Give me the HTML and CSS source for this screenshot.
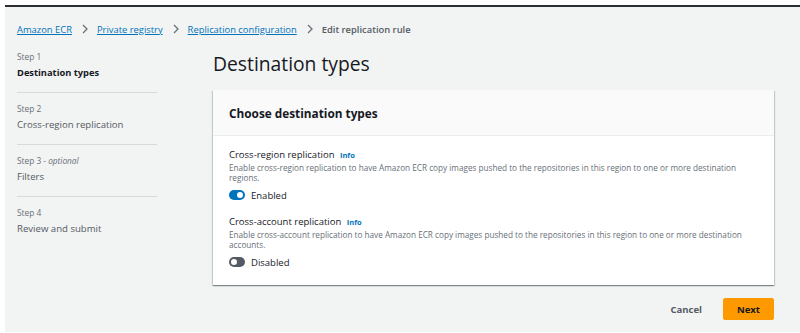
FILE: index.html
```html
<!DOCTYPE html>
<html>
<head>
<meta charset="utf-8">
<link rel="stylesheet" href="styles.css">
</head>
<body>
<div class="frame">
  <div class="topline"></div>
  <div class="page">
    <nav class="crumbs">
      <a href="#">Amazon ECR</a>
      <span class="sep"><svg width="8" height="10" viewBox="0 0 8 10"><path d="M2 1l4 4-4 4" fill="none" stroke="#687078" stroke-width="1.3"/></svg></span>
      <a href="#">Private registry</a>
      <span class="sep"><svg width="8" height="10" viewBox="0 0 8 10"><path d="M2 1l4 4-4 4" fill="none" stroke="#687078" stroke-width="1.3"/></svg></span>
      <a href="#">Replication configuration</a>
      <span class="sep"><svg width="8" height="10" viewBox="0 0 8 10"><path d="M2 1l4 4-4 4" fill="none" stroke="#687078" stroke-width="1.3"/></svg></span>
      <span class="current">Edit replication rule</span>
    </nav>
    <div class="layout">
      <aside class="steps">
        <div class="step">
          <div class="step-num">Step 1</div>
          <div class="step-name active">Destination types</div>
        </div>
        <div class="step">
          <div class="step-num">Step 2</div>
          <div class="step-name">Cross-region replication</div>
        </div>
        <div class="step">
          <div class="step-num">Step 3 - <i>optional</i></div>
          <div class="step-name">Filters</div>
        </div>
        <div class="step last">
          <div class="step-num">Step 4</div>
          <div class="step-name">Review and submit</div>
        </div>
      </aside>
      <main class="main">
        <h1 class="title">Destination types</h1>
        <section class="card">
          <header class="card-head">Choose destination types</header>
          <div class="card-body">
            <div class="field">
              <div class="label">Cross-region replication <a class="info" href="#">Info</a></div>
              <div class="desc">Enable cross-region replication to have Amazon ECR copy images pushed to the repositories in this region to one or more destination regions.</div>
              <div class="toggle-row"><span class="toggle on"><span class="knob"></span></span><span class="toggle-label">Enabled</span></div>
            </div>
            <div class="field">
              <div class="label">Cross-account replication <a class="info" href="#">Info</a></div>
              <div class="desc">Enable cross-account replication to have Amazon ECR copy images pushed to the repositories in this region to one or more destination accounts.</div>
              <div class="toggle-row"><span class="toggle off"><span class="knob"></span></span><span class="toggle-label">Disabled</span></div>
            </div>
          </div>
        </section>
        <div class="actions">
          <button class="btn-link">Cancel</button>
          <button class="btn-primary">Next</button>
        </div>
      </main>
    </div>
  </div>
</div>
</body>
</html>
```
FILE: styles.css
```css
* { box-sizing: border-box; }
html, body { margin: 0; padding: 0; background: #fff; }
body { font-family: "Open Sans", "Noto Sans", sans-serif; color: #16191f; }
.frame { margin: 5px 0 1px 5px; height: 327px; background: #f2f3f3; display: flex; flex-direction: column; overflow: hidden; }
.topline { height: 2px; background: #2a2e33; flex: none; }
.page { padding: 12px 26px 0 12px; }
.crumbs { display: flex; align-items: center; font-size: 9.4px; height: 20px; }
.crumbs a { color: #0073bb; text-decoration: underline; }
.crumbs .sep { display: inline-flex; margin: 0 8px 0 9px; }
.crumbs .current { color: #545b64; font-weight: 600; }
.layout { display: flex; margin-top: 5px; }
.steps { width: 140px; flex: none; }
.step { border-bottom: 1px solid #d5dbdb; padding: 10px 0 12px; }
.step:first-child { padding-top: 7px; padding-bottom: 12px; }
.step.last { border-bottom: none; }
.step-num { font-size: 8.3px; color: #687078; line-height: 11px; }
.step-name { font-size: 9.6px; color: #545b64; line-height: 14px; margin-top: 4px; }
.step-name.active { color: #16191f; font-weight: 700; font-size: 9.3px; }
.main { flex: 1; margin-left: 56px; }
.title { font-size: 19.3px; font-weight: 400; margin: 0; line-height: 26px; padding: 7px 0 13px; color: #16191f; }
.card { background: #fff; box-shadow: 0 1px 1px 0 rgba(0,28,36,.3), 1px 1px 1px 0 rgba(0,28,36,.15), -1px 1px 1px 0 rgba(0,28,36,.15); }
.card-head { background: #fafafa; border-bottom: 1px solid #eaeded; height: 46px; padding: 0 16px; display: flex; align-items: center; font-size: 11.8px; font-weight: 700; }
.card-body { padding: 12px 16px 16px; }
.field { margin-bottom: 13px; }
.field:last-child { margin-bottom: 0; }
.label { font-size: 9.5px; line-height: 14px; color: #16191f; }
.info { color: #0073bb; font-size: 7.5px; font-weight: 700; text-decoration: none; margin-left: 3px; }
.desc { font-size: 8.2px; line-height: 9.5px; color: #687078; margin-top: 1px; }
.toggle-row { display: flex; align-items: center; height: 14px; margin-top: 6px; }
.toggle { width: 16px; height: 10px; border-radius: 5px; position: relative; display: inline-block; }
.toggle.on { background: #0073bb; }
.toggle.off { background: #545b64; }
.knob { position: absolute; top: 2px; width: 6px; height: 6px; border-radius: 50%; background: #fff; }
.toggle.on .knob { right: 2px; }
.toggle.off .knob { left: 2px; }
.toggle-label { font-size: 9.5px; color: #16191f; margin-left: 6px; }
.actions { display: flex; justify-content: flex-end; align-items: center; margin-top: 13px; }
.btn-link { background: none; border: none; font-family: inherit; font-size: 9.5px; font-weight: 700; color: #545b64; padding: 0; margin-right: 21px; }
.btn-primary { background: #ff9900; border: 1px solid #ff9900; border-radius: 2px; font-family: inherit; font-size: 9.5px; font-weight: 700; color: #16191f; width: 51px; height: 22px; padding: 0; }
```
